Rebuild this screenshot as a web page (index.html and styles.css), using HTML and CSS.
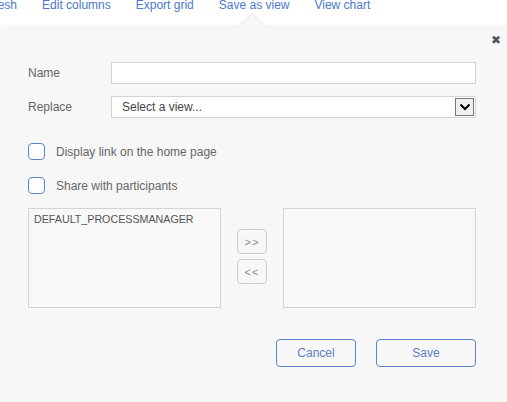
FILE: index.html
```html
<!DOCTYPE html>
<html>
<head>
<meta charset="utf-8">
<link rel="stylesheet" href="styles.css">
</head>
<body>
<nav class="toolbar">
  <span class="tool tool-first">Refresh</span>
  <span class="tool">Edit columns</span>
  <span class="tool">Export grid</span>
  <span class="tool">Save as view</span>
  <span class="tool">View chart</span>
</nav>
<section class="panel">
  <span class="close">&#x2716;</span>
  <div class="form">
    <div class="row">
      <label class="label">Name</label>
      <div class="input"></div>
    </div>
    <div class="row">
      <label class="label">Replace</label>
      <div class="input select">
        <span>Select a view...</span>
        <span class="drop">
          <svg width="12" height="8" viewBox="0 0 12 8"><path d="M1.5 1.5 L6 6 L10.5 1.5" fill="none" stroke="#000" stroke-width="2"/></svg>
        </span>
      </div>
    </div>
  </div>
  <div class="checks">
    <div class="check"><span class="box"></span><span>Display link on the home page</span></div>
    <div class="check"><span class="box"></span><span>Share with participants</span></div>
  </div>
  <div class="lists">
    <div class="list"><div class="item">DEFAULT_PROCESSMANAGER</div></div>
    <div class="movers">
      <span class="mover">&gt;&gt;</span>
      <span class="mover">&lt;&lt;</span>
    </div>
    <div class="list"></div>
  </div>
  <div class="actions">
    <span class="btn btn-cancel">Cancel</span>
    <span class="btn btn-save">Save</span>
  </div>
</section>
</body>
</html>
```
FILE: styles.css
```css
html, body {
  margin: 0;
  padding: 0;
  background: #f8f8f8;
  font-family: "Liberation Sans", Arial, sans-serif;
  overflow: hidden;
}
.toolbar {
  height: 27px;
  background: #fff;
  display: flex;
  align-items: flex-start;
  gap: 25px;
  overflow: hidden;
}
.tool {
  font-size: 12px;
  line-height: 12px;
  margin-top: -1px;
  color: #4a78cc;
  white-space: nowrap;
}
.tool-first {
  margin-left: -25px;
}
.panel {
  position: relative;
  height: 375px;
  background: #f7f7f7;
  box-shadow: 0 -1px 3px rgba(0, 0, 0, 0.07);
  padding: 35px 31px 0 28px;
  box-sizing: border-box;
  display: flex;
  flex-direction: column;
}
.panel::before {
  content: "";
  position: absolute;
  left: 241px;
  top: -10px;
  width: 21px;
  height: 21px;
  background: #f7f7f7;
  border-top: 1px solid #ececec;
  border-left: 1px solid #ececec;
  transform: rotate(45deg);
}
.close {
  position: absolute;
  right: 6px;
  top: 6px;
  font-size: 12px;
  color: #555;
  font-family: "DejaVu Sans", sans-serif;
}
.form {
  display: flex;
  flex-direction: column;
  gap: 12px;
}
.row {
  display: flex;
  align-items: center;
}
.label {
  width: 83px;
  font-size: 12px;
  color: #666;
}
.input {
  flex: 1;
  height: 22px;
  box-sizing: border-box;
  background: #fff;
  border: 1px solid #d4d4d4;
}
.select {
  display: flex;
  align-items: center;
  justify-content: space-between;
  padding-left: 10px;
  padding-right: 1px;
  font-size: 12px;
  color: #444;
}
.drop {
  width: 19px;
  height: 18px;
  box-sizing: border-box;
  border: 1px solid #767676;
  background: #f0f0f0;
  display: flex;
  align-items: center;
  justify-content: center;
}
.checks {
  margin-top: 25px;
  display: flex;
  flex-direction: column;
  gap: 17px;
}
.check {
  display: flex;
  align-items: center;
  gap: 11px;
  font-size: 12px;
  color: #666;
  height: 17px;
}
.box {
  width: 17px;
  height: 17px;
  box-sizing: border-box;
  border: 1px solid #5b87c9;
  border-radius: 4px;
  background: #fff;
}
.lists {
  margin-top: 14px;
  display: flex;
  align-items: flex-start;
}
.list {
  width: 193px;
  height: 100px;
  box-sizing: border-box;
  border: 1px solid #d4d4d4;
  background: #f8f8f8;
}
.item {
  padding: 4px 5px;
  font-size: 10.7px;
  color: #555;
}
.movers {
  width: 62px;
  display: flex;
  flex-direction: column;
  align-items: center;
  gap: 5px;
  padding-top: 21px;
}
.mover {
  width: 30px;
  height: 25px;
  box-sizing: border-box;
  border: 1px solid #ccc;
  border-radius: 4px;
  display: flex;
  align-items: center;
  justify-content: center;
  font-size: 11px;
  color: #888;
  letter-spacing: 1px;
}
.actions {
  margin-top: 31px;
  display: flex;
  justify-content: flex-end;
  gap: 20px;
}
.btn {
  height: 28px;
  box-sizing: border-box;
  border: 1px solid #5b87c9;
  border-radius: 4px;
  display: flex;
  align-items: center;
  justify-content: center;
  font-size: 12px;
  color: #5b7fc5;
}
.btn-cancel { width: 80px; }
.btn-save { width: 100px; }
```
